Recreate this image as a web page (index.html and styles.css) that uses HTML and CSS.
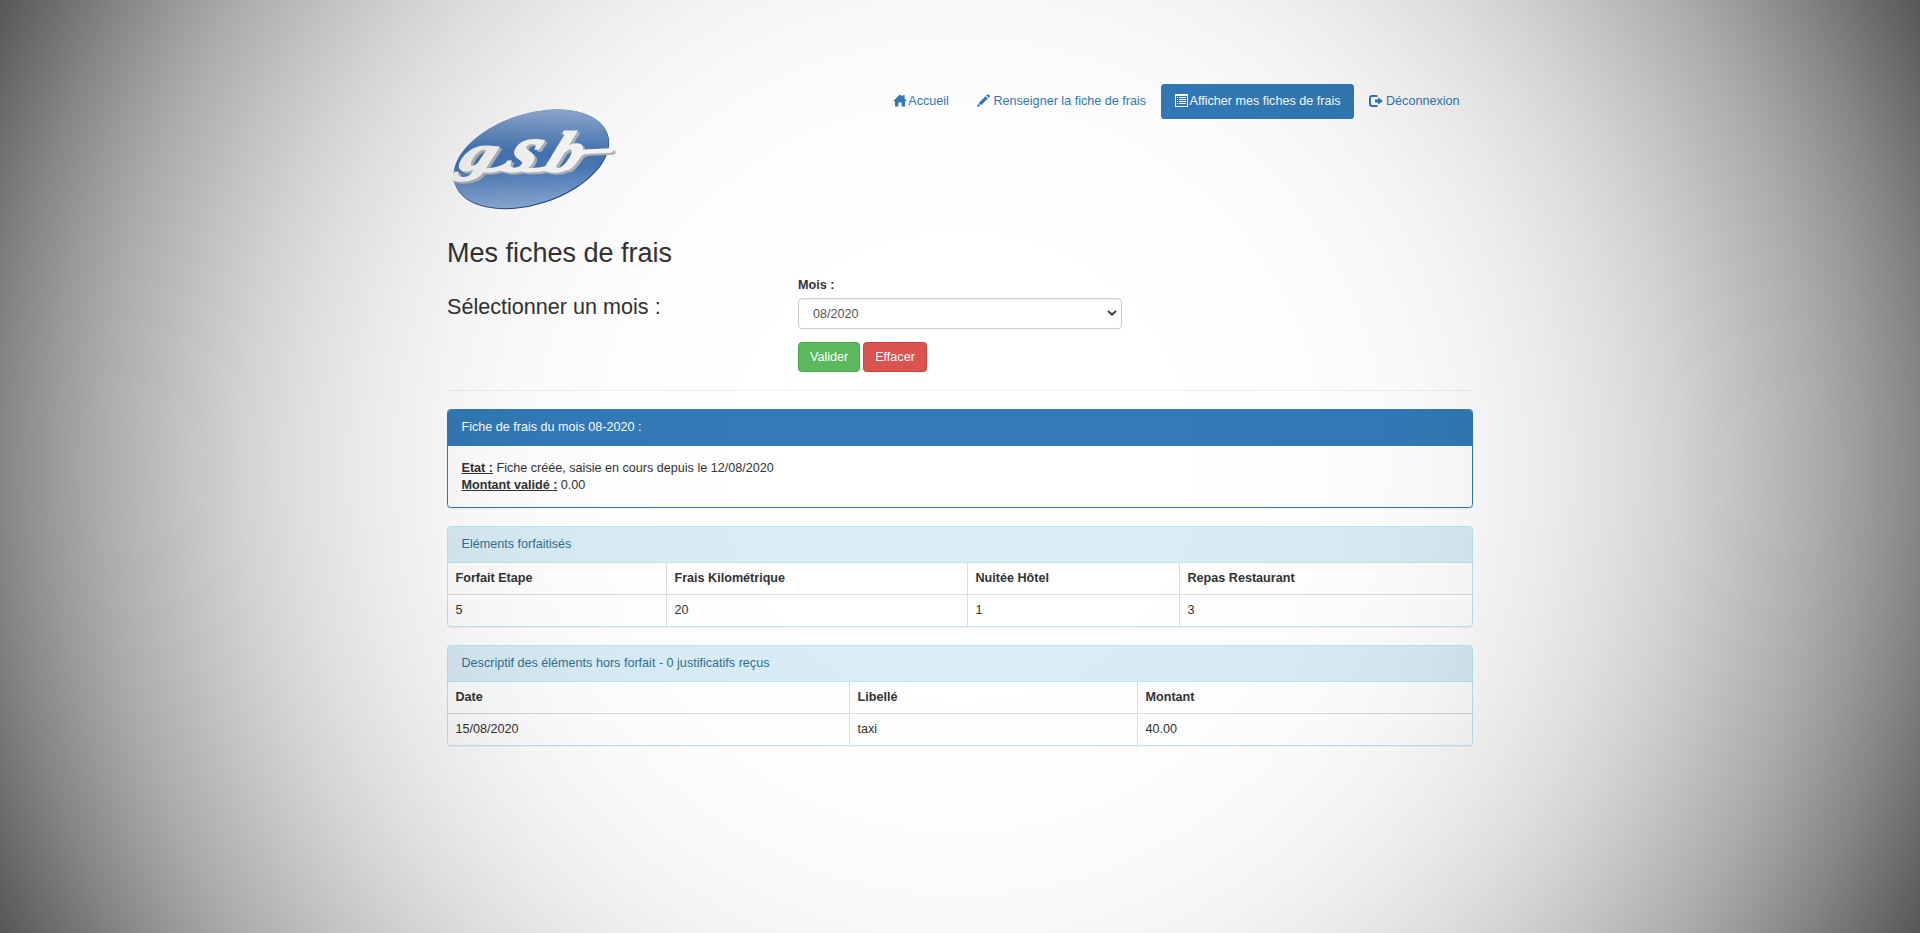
FILE: index.html
```html
<!DOCTYPE html>
<html lang="fr">
<head>
<meta charset="utf-8">
<title>Mes fiches de frais</title>
<link rel="stylesheet" href="styles.css">
</head>
<body>
<div class="container">
  <header class="header">
    <svg class="logo" viewBox="447 104 170 112" role="img" aria-label="gsb">
      <defs>
        <linearGradient id="oval" gradientUnits="userSpaceOnUse" x1="531" y1="109" x2="531" y2="209" gradientTransform="rotate(18 531 159)">
          <stop offset="0" stop-color="#93aed4"/>
          <stop offset=".42" stop-color="#4677b6"/>
          <stop offset=".58" stop-color="#4a7ab9"/>
          <stop offset="1" stop-color="#8fadd6"/>
        </linearGradient>
      </defs>
      <ellipse cx="531.4" cy="159.4" rx="80.4" ry="45.4" fill="#264a80" transform="rotate(-18 531.4 159.4)"/>
      <ellipse cx="531" cy="158.7" rx="80.2" ry="45" fill="url(#oval)" transform="rotate(-18 531 158.7)"/>
      <g class="logo-shadow" transform="translate(2.5 2)">
        <path d="M480 170Q496 172 507 165M524 170Q536 171 548 168M568 168C578 162 576 152 588 151.500L611 150.500"/>
        <text transform="translate(457 170) skewX(-22) scale(1.35 1)" font-size="50">g</text>
        <text transform="translate(502 171) skewX(-26) scale(1.15 1)" font-size="66">s</text>
        <text transform="translate(543 171) skewX(-22) scale(1.15 1)" font-size="57">b</text>
      </g>
      <g class="logo-letters">
        <path d="M480 170Q496 172 507 165M524 170Q536 171 548 168M568 168C578 162 576 152 588 151.500L611 150.500"/>
        <text transform="translate(457 170) skewX(-22) scale(1.35 1)" font-size="50">g</text>
        <text transform="translate(502 171) skewX(-26) scale(1.15 1)" font-size="66">s</text>
        <text transform="translate(543 171) skewX(-22) scale(1.15 1)" font-size="57">b</text>
      </g>
    </svg>
    <nav class="nav">
      <a class="nav-link" href="#"><svg class="icon icon-home" viewBox="0 0 15 13"><path d="M7.5 0 10 2.300V1H12.500V4.600L15 7.200H12.900V13H9.200V8.600H5.800V13H2.200V7.200H0Z"/></svg>Accueil</a>
      <a class="nav-link" href="#"><svg class="icon icon-pencil" viewBox="0 0 13 13"><path d="M10.3.4Q10.9-.2 11.5.4L12.7 1.6Q13.2 2.1 12.7 2.7L11.6 3.8 9.2 1.5ZM8.5 2.2 10.9 4.5 4 11.2 1.7 8.9ZM1.1 9.5 3.4 11.8 0 13Z"/></svg>Renseigner la fiche de frais</a>
      <a class="nav-link active" href="#"><svg class="icon icon-list" viewBox="0 0 13 13"><path fill-rule="evenodd" d="M0 0H13V13H0ZM1 2V12H12V2ZM2 3H3V4H2ZM4 3H11V4H4ZM2 5H3V6H2ZM4 5H11V6H4ZM2 7H3V8H2ZM4 7H11V8H4ZM2 9H3V10H2ZM4 9H11V10H4Z"/></svg>Afficher mes fiches de frais</a>
      <a class="nav-link" href="#"><svg class="icon icon-logout" viewBox="0 0 14 12"><path d="M8.5 0V2H3.3Q2 2 2 3.3V8.7Q2 10 3.3 10H8.500V12H3Q0 12 0 9V3Q0 0 3 0ZM9 2.5 14 6 9 9.500V7.500H6V4.500H9Z"/></svg>Déconnexion</a>
    </nav>
  </header>
  <h2 class="page-title">Mes fiches de frais</h2>
  <section class="picker">
    <h3 class="picker-title">Sélectionner un mois :</h3>
    <form class="picker-form">
      <label class="label" for="mois">Mois :</label>
      <div class="select-wrap">
        <select class="select" id="mois"><option>08/2020</option></select>
        <svg class="chevron" viewBox="0 0 10 6"><path d="M1 1 5 4.6 9 1"/></svg>
      </div>
      <div class="buttons">
        <button class="btn btn-success" type="button">Valider</button>
        <button class="btn btn-danger" type="button">Effacer</button>
      </div>
    </form>
  </section>
  <hr class="rule">
  <section class="panel panel-primary">
    <div class="panel-heading">Fiche de frais du mois 08-2020 :</div>
    <div class="panel-body"><strong class="key">Etat :</strong> Fiche créée, saisie en cours depuis le 12/08/2020<br><strong class="key">Montant validé :</strong> 0.00</div>
  </section>
  <section class="panel panel-info">
    <div class="panel-heading">Eléments forfaitisés</div>
    <table class="table">
      <colgroup><col class="col-etape"><col class="col-km"><col class="col-nuit"><col></colgroup>
      <tr><th>Forfait Etape</th><th>Frais Kilométrique</th><th>Nuitée Hôtel</th><th>Repas Restaurant</th></tr>
      <tr><td>5</td><td>20</td><td>1</td><td>3</td></tr>
    </table>
  </section>
  <section class="panel panel-info">
    <div class="panel-heading">Descriptif des éléments hors forfait - 0 justificatifs reçus</div>
    <table class="table">
      <colgroup><col class="col-date"><col class="col-libelle"><col></colgroup>
      <tr><th>Date</th><th>Libellé</th><th>Montant</th></tr>
      <tr><td>15/08/2020</td><td>taxi</td><td>40.00</td></tr>
    </table>
  </section>
</div>
<div class="vignette"></div>
</body>
</html>
```

FILE: styles.css
```css
* { box-sizing: border-box; }
body {
  margin: 0;
  background: #fff;
  color: #333;
  font: 12.6px/17px "Liberation Sans", Arial, sans-serif;
}
.container { width: 1026px; margin: 0 auto; }

.header {
  display: flex;
  justify-content: space-between;
  align-items: flex-start;
  height: 221px;
  padding-top: 84px;
}
.logo { width: 170px; height: 112px; margin-top: 20px; }
.logo text {
  font-family: "Liberation Serif", serif;
  font-style: italic;
  font-weight: bold;
  stroke-width: 2;
}
.logo path { stroke-width: 4.5; fill: none; stroke-linecap: round; }
.logo-shadow { fill: #b4b6ba; stroke: #b4b6ba; }
.logo-letters { fill: #fbfbfb; stroke: #fbfbfb; }

.nav { display: flex; gap: 1.5px; }
.nav-link {
  display: flex;
  align-items: center;
  padding: 9px 13.5px;
  border-radius: 3.6px;
  color: #337ab7;
  text-decoration: none;
  white-space: nowrap;
}
.nav-link.active { background: #337ab7; color: #fff; padding-right: 14px; }
.icon { fill: currentColor; margin-top: -2px; }
.icon-home { width: 14px; height: 13px; margin-right: 1px; }
.icon-pencil { width: 13px; height: 13px; margin-right: 3px; }
.icon-list { width: 13px; height: 13px; margin-right: 2px; }
.icon-logout { width: 14px; height: 12px; margin-right: 2.5px; }

.page-title { margin: 18px 0 9px; font-size: 27px; line-height: 29px; font-weight: 400; }
.picker { display: grid; grid-template-columns: 351px 324px; }
.picker-title { margin: 18px 0 0; font-size: 21.6px; line-height: 24px; font-weight: 400; }
.label { display: block; margin-bottom: 4px; font-weight: 700; }
.select-wrap { position: relative; }
.select {
  display: block;
  appearance: none;
  width: 324px;
  height: 31px;
  padding: 1px 14px 0;
  border: 1px solid #ccc;
  border-radius: 3.6px;
  background: #fff;
  box-shadow: inset 0 1px 1px rgba(0, 0, 0, .075);
  color: #555;
  font: inherit;
}
.chevron {
  position: absolute;
  right: 5px;
  top: 12px;
  width: 10px;
  height: 6px;
  fill: none;
  stroke: #444;
  stroke-width: 2;
}
.buttons { display: flex; gap: 3px; margin-top: 13px; }
.btn {
  height: 30px;
  padding: 0 11px;
  border: 1px solid;
  border-radius: 3.6px;
  color: #fff;
  font: inherit;
}
.btn-success { width: 62px; background: #5cb85c; border-color: #4cae4c; }
.btn-danger { width: 64px; background: #d9534f; border-color: #d43f3a; }
.rule { margin: 18px 0; border: 0; border-top: 1px solid #eee; }

.panel {
  margin-bottom: 18px;
  border: 1px solid;
  border-radius: 3.6px;
  background: #fff;
  box-shadow: 0 1px 1px rgba(0, 0, 0, .05);
}
.panel-primary { border-color: #337ab7; }
.panel-info { border-color: #bce8f1; }
.panel-heading {
  padding: 9px 13.5px;
  border-bottom: 1px solid;
  border-radius: 2.6px 2.6px 0 0;
}
.panel-primary .panel-heading { background: #337ab7; border-color: #337ab7; color: #fff; }
.panel-info .panel-heading { background: #d9edf7; border-color: #bce8f1; color: #31708f; }
.panel-body { padding: 13.5px; }
.key { text-decoration: underline; }

.table { width: 100%; table-layout: fixed; border-spacing: 0; }
.table th, .table td {
  height: 32px;
  padding: 7px 7.5px;
  text-align: left;
  border-left: 1px solid #ddd;
}
.table th { height: 31px; }
.table td { border-top: 1px solid #ddd; }
.table th:first-child, .table td:first-child { border-left: 0; }
.col-etape { width: 218px; }
.col-km { width: 301px; }
.col-nuit { width: 212px; }
.col-date { width: 401px; }
.col-libelle { width: 288px; }

/* Darkened page edges, drawn above the content */
.vignette {
  position: fixed;
  inset: 0;
  pointer-events: none;
  background: radial-gradient(circle at center,
    rgba(0, 0, 0, 0) 200px,
    rgba(0, 0, 0, .006) 350px,
    rgba(0, 0, 0, .018) 440px,
    rgba(0, 0, 0, .045) 520px,
    rgba(0, 0, 0, .08) 590px,
    rgba(0, 0, 0, .125) 660px,
    rgba(0, 0, 0, .175) 720px,
    rgba(0, 0, 0, .24) 780px,
    rgba(0, 0, 0, .33) 860px,
    rgba(0, 0, 0, .40) 910px,
    rgba(0, 0, 0, .48) 960px,
    rgba(0, 0, 0, .66) 1067px);
}
```
